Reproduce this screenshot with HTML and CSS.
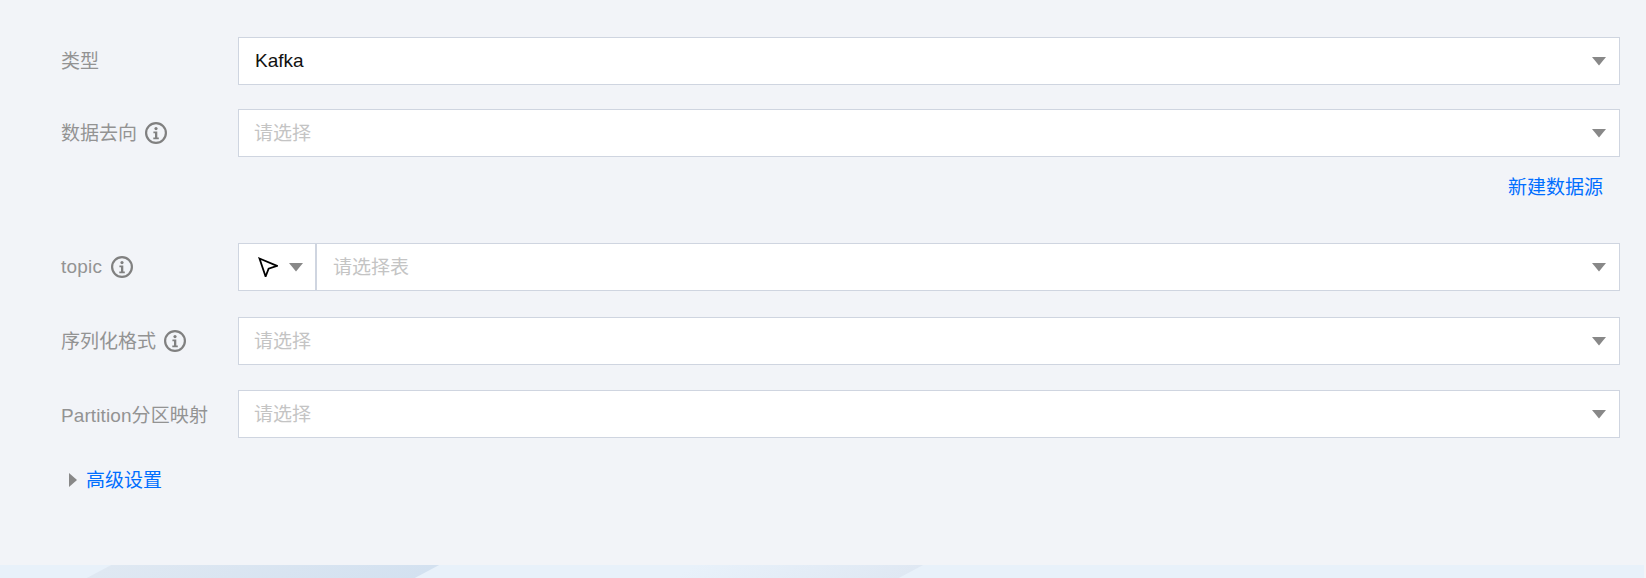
FILE: index.html
```html
<!DOCTYPE html>
<html lang="zh">
<head>
<meta charset="utf-8">
<title>Kafka</title>
<link rel="stylesheet" href="styles.css">
</head>
<body>
<svg class="defs" width="0" height="0" aria-hidden="true">
  <symbol id="info" viewBox="0 0 22 22">
    <circle cx="11" cy="11" r="9.9" fill="none" stroke="currentColor" stroke-width="2.2"/>
    <circle cx="11" cy="6.6" r="1.6" fill="currentColor"/>
    <path d="M8.4 9.4h3.9v6h1.5v1.8H8.3v-1.8H10v-4.2H8.4z" fill="currentColor"/>
  </symbol>
  <symbol id="caret" viewBox="0 0 14 9">
    <path d="M0 0h14L7 8.5z" fill="currentColor"/>
  </symbol>
</svg>
<main class="form">
  <div class="row">
    <div class="label label-cjk">类型</div>
    <div class="select"><span class="value">Kafka</span><svg class="caret"><use href="#caret"/></svg></div>
  </div>
  <div class="row">
    <div class="label label-cjk">数据去向<svg class="info"><use href="#info"/></svg></div>
    <div class="select"><span class="placeholder">请选择</span><svg class="caret"><use href="#caret"/></svg></div>
  </div>
  <div class="link-row"><a class="link">新建数据源</a></div>
  <div class="row row-topic">
    <div class="label label-latin">topic<svg class="info"><use href="#info"/></svg></div>
    <div class="combo">
      <div class="mode">
        <svg class="cursor" viewBox="0 0 20 20"><path d="M1.5 1.5 19 8.8 10.6 11.6 7.6 19.5z" fill="none" stroke="#000" stroke-width="1.8"/></svg>
        <svg class="caret"><use href="#caret"/></svg>
      </div>
      <div class="select select-inner"><span class="placeholder">请选择表</span><svg class="caret"><use href="#caret"/></svg></div>
    </div>
  </div>
  <div class="row row-format">
    <div class="label label-cjk">序列化格式<svg class="info"><use href="#info"/></svg></div>
    <div class="select"><span class="placeholder">请选择</span><svg class="caret"><use href="#caret"/></svg></div>
  </div>
  <div class="row row-partition">
    <div class="label label-mixed">Partition分区映射</div>
    <div class="select"><span class="placeholder">请选择</span><svg class="caret"><use href="#caret"/></svg></div>
  </div>
  <div class="advanced"><span class="arrow"></span><a class="link">高级设置</a></div>
</main>
<footer class="band"><span class="slant slant-a"></span><span class="slant slant-b"></span></footer>
</body>
</html>
```
FILE: styles.css
```css
* { box-sizing: border-box; }
html, body { margin: 0; height: 100%; }
body {
  position: relative;
  height: 578px;
  overflow: hidden;
  background: #f2f4f8;
  font-family: "Liberation Sans", "Noto Sans CJK SC", sans-serif;
  font-size: 19px;
}
.defs { position: absolute; }
.form { padding: 37px 26px 0 61px; }
.row { display: flex; align-items: center; height: 48px; margin-bottom: 24px; }
.row-topic { margin-bottom: 26px; }
.row-format { margin-bottom: 25px; }
.row-partition { margin-bottom: 0; }
.label {
  flex: 0 0 177px;
  display: flex;
  align-items: center;
  color: #939393;
  white-space: nowrap;
}
.label-cjk { padding-bottom: 4px; }
.label-cjk .info { margin-top: 3px; }
.label-latin { letter-spacing: 0.2px; }
.label-latin .info { margin-left: 9px; }
.label-mixed { padding-bottom: 2px; letter-spacing: 0.1px; }
.info { width: 22px; height: 22px; margin-left: 8px; color: #808080; }
.select {
  flex: 1;
  display: flex;
  align-items: center;
  justify-content: space-between;
  height: 48px;
  padding: 0 13px 0 16px;
  background: #fff;
  border: 1px solid #cfd5e0;
}
.value { color: #111; }
.placeholder { color: #c4c4c4; padding-bottom: 4px; margin-left: -1px; }
.caret { width: 14px; height: 9px; color: #888; }
.link-row {
  display: flex;
  justify-content: flex-end;
  align-items: center;
  height: 38px;
  padding: 0 17px 4px 0;
  margin-top: -13px;
  margin-bottom: 37px;
}
.link { color: #006eff; }
.combo { flex: 1; display: flex; height: 48px; }
.mode {
  flex: 0 0 79px;
  display: flex;
  align-items: center;
  gap: 11px;
  padding-left: 19px;
  background: #fff;
  border: 1px solid #cfd5e0;
  border-right: 2px solid #cfd5e0;
}
.cursor { width: 20px; height: 20px; }
.select-inner { border-left: 0; padding-left: 17px; }
.advanced { display: flex; align-items: center; gap: 9px; margin-top: 26px; padding: 0 0 4px 8px; height: 32px; }
.arrow {
  width: 0;
  height: 0;
  margin-top: 3px;
  border-left: 8px solid #888;
  border-top: 7px solid transparent;
  border-bottom: 7px solid transparent;
}
.band {
  position: absolute;
  left: 0;
  right: 2px;
  bottom: 0;
  height: 13px;
  overflow: hidden;
  background: #e8f1fa;
}
.slant { position: absolute; top: 0; height: 13px; transform: skewX(-62deg); }
.slant-a { left: 99px; width: 328px; background: linear-gradient(90deg, #dfe8f2, #d3e1f0); }
.slant-b { left: 683px; width: 228px; background: linear-gradient(90deg, #e8f1fa, #dfe8f3); }
```
